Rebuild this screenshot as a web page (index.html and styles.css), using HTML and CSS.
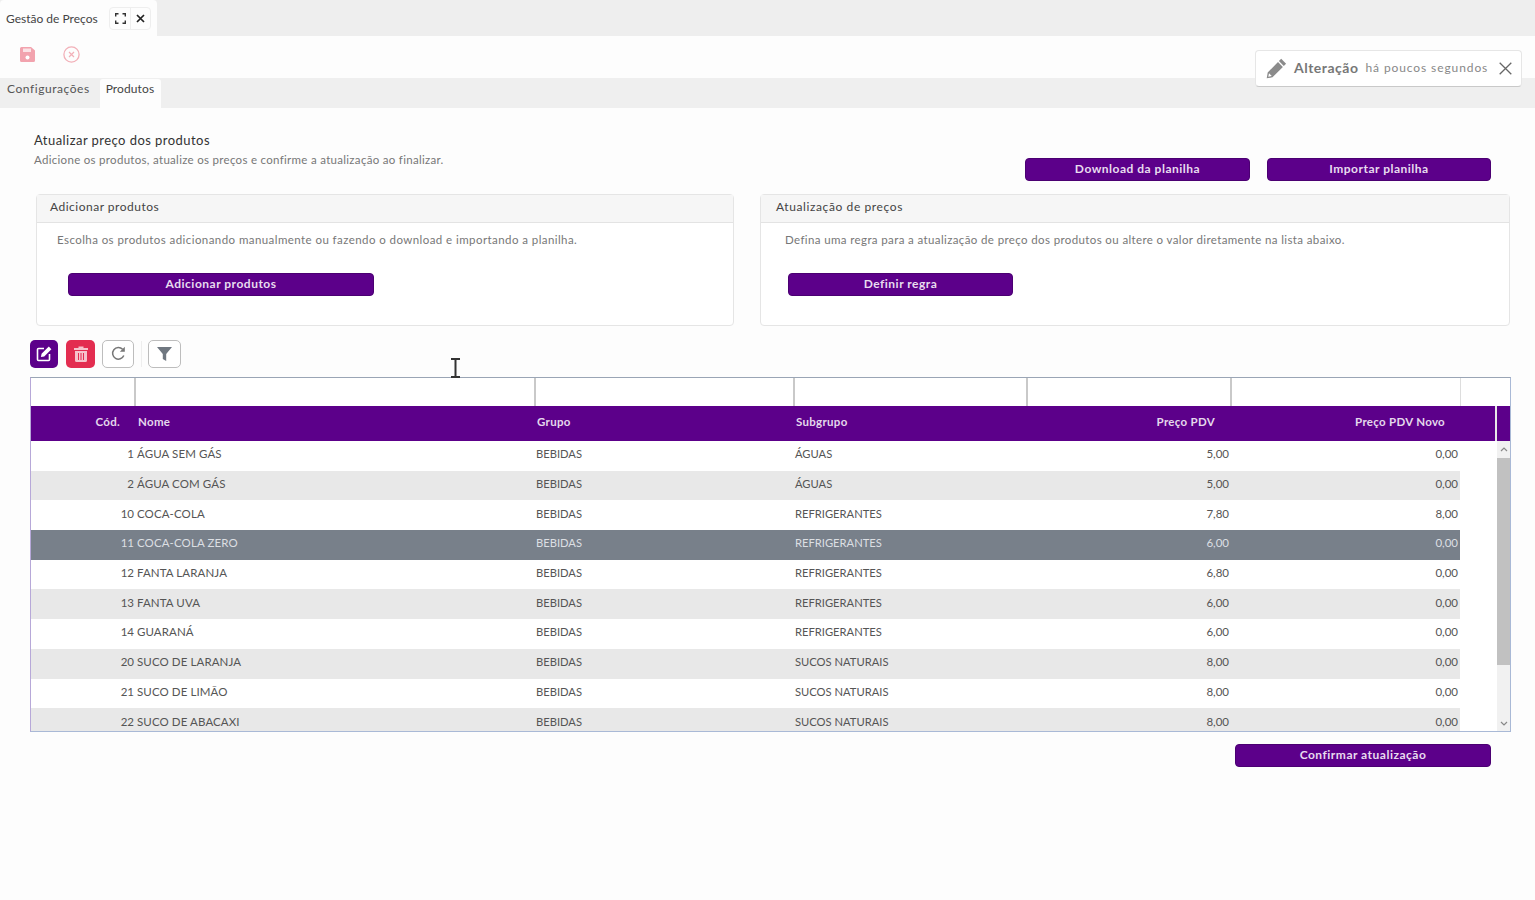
FILE: index.html

```html
<!DOCTYPE html>
<html lang="pt-BR">
<head>
    <meta charset="UTF-8">
    <meta name="viewport" content="width=device-width, initial-scale=1.0">
    <title>Gestão de Preços</title>
    <link rel="stylesheet" href="styles.css">
</head>
<body>
    <div class="window-bar">
        <div class="window-tab">
            <span class="window-title">Gestão de Preços</span>
            <span class="window-actions">
                <button class="window-btn" aria-label="Expandir">
                    <svg width="11" height="11" viewBox="0 0 11 11" fill="none" stroke="#333" stroke-width="1.4"><path d="M.7 3.5V.7h2.8M7.5.7h2.8v2.8M10.3 7.5v2.8H7.5M3.5 10.3H.7V7.5"/></svg>
                </button>
                <button class="window-btn" aria-label="Fechar">
                    <svg width="9" height="9" viewBox="0 0 9 9" fill="none" stroke="#222" stroke-width="1.7"><path d="M1 1l7 7M8 1L1 8"/></svg>
                </button>
            </span>
        </div>
    </div>

    <div class="actions">
        <svg class="action-save" width="15" height="15" viewBox="0 0 15 15"><path fill="#f2a3ae" d="M1.5 0H11l4 3.5v10a1.500 1.500 0 0 1-1.500 1.500h-12A1.500 1.500 0 0 1 0 13.500v-12A1.500 1.500 0 0 1 1.500 0z"/><rect x="3" y="1.500" width="8" height="3.500" fill="#fbe3e6"/><circle cx="7.500" cy="10.500" r="2" fill="#fff"/></svg>
        <svg width="17" height="17" viewBox="0 0 17 17" fill="none" stroke="#f2b0b8"><circle cx="8.500" cy="8.500" r="7.600" stroke-width="1.300"/><path d="M6 6l5 5M11 6l-5 5" stroke-width="1.200"/></svg>
    </div>

    <div class="tabs">
        <span class="tab">Configurações</span>
        <span class="tab active">Produtos</span>
    </div>

    <div class="toast">
        <svg width="21" height="21" viewBox="0 0 21 21"><path fill="#8b8b8b" d="M15.200.8l4.900 4.900-2.300 2.300-4.900-4.900zM12 4l4.900 4.900L6.500 19.300.7 20.300l1-5.800zM3 15.200l-.7 3.500 3.500-.7z"/></svg>
        <strong>Alteração</strong>
        <span class="toast-time">há poucos segundos</span>
        <svg class="toast-close" width="13" height="13" viewBox="0 0 13 13" fill="none" stroke="#666" stroke-width="1.300"><path d="M.7.7l11.600 11.600M12.300.7L.7 12.300"/></svg>
    </div>

    <main class="content">
        <div class="intro">
            <div class="intro-text">
                <h1>Atualizar preço dos produtos</h1>
                <p>Adicione os produtos, atualize os preços e confirme a atualização ao finalizar.</p>
            </div>
            <div class="intro-buttons">
                <button class="btn btn-download">Download da planilha</button>
                <button class="btn btn-import">Importar planilha</button>
            </div>
        </div>

        <div class="panels">
            <section class="panel panel-add">
                <div class="panel-header">Adicionar produtos</div>
                <div class="panel-body">
                    <p>Escolha os produtos adicionando manualmente ou fazendo o download e importando a planilha.</p>
                    <button class="btn btn-add">Adicionar produtos</button>
                </div>
            </section>
            <section class="panel panel-rule">
                <div class="panel-header">Atualização de preços</div>
                <div class="panel-body">
                    <p>Defina uma regra para a atualização de preço dos produtos ou altere o valor diretamente na lista abaixo.</p>
                    <button class="btn btn-rule">Definir regra</button>
                </div>
            </section>
        </div>

        <div class="grid-tools">
            <button class="tool tool-edit" aria-label="Editar">
                <svg width="16" height="16" viewBox="0 0 16 16" fill="none" stroke="#fff" stroke-width="1.600"><path d="M8 2.500H2.500a1 1 0 0 0-1 1v10a1 1 0 0 0 1 1h10a1 1 0 0 0 1-1V8"/><path fill="#fff" stroke="none" d="M12.800.6l2.600 2.600-7.200 7.200-3.300.7.700-3.300z"/></svg>
            </button>
            <button class="tool tool-delete" aria-label="Excluir">
                <svg width="14" height="16" viewBox="0 0 14 16"><path fill="#f6c3cc" d="M0 2h4.500V.5h5V2H14v2H0zM1 5h12v9.500a1.500 1.500 0 0 1-1.500 1.500h-9A1.500 1.500 0 0 1 1 14.500z"/><path stroke="#e32d50" d="M4.500 7v7M7 7v7M9.500 7v7"/></svg>
            </button>
            <button class="tool tool-refresh" aria-label="Atualizar">
                <svg width="15" height="15" viewBox="0 0 15 15" fill="none" stroke="#777" stroke-width="1.500"><path d="M12.800 9.500A5.800 5.800 0 1 1 11.600 3.300"/><path fill="#777" stroke="none" d="M13.800.8v5h-5z"/></svg>
            </button>
            <span class="tool-sep"></span>
            <button class="tool tool-filter" aria-label="Filtrar">
                <svg width="15" height="14" viewBox="0 0 15 14"><path fill="#6f7780" d="M0 0h15L9.200 7v7l-3.400-2V7z"/></svg>
            </button>
        </div>

        <div class="grid">
            <div class="row filter-row">
                <span></span><span></span><span></span><span></span><span></span><span></span>
            </div>
            <div class="row head-row">
                <span class="num code-head">Cód.</span>
                <span class="head-name">Nome</span>
                <span>Grupo</span>
                <span>Subgrupo</span>
                <span class="num price-head">Preço PDV</span>
                <span class="num new-head">Preço PDV Novo</span>
            </div>
            <div class="grid-body">
                <div class="rows">
                    <div class="row"><span class="num">1</span><span class="name">ÁGUA SEM GÁS</span><span class="tag">BEBIDAS</span><span class="tag">ÁGUAS</span><span class="num">5,00</span><span class="num">0,00</span></div>
                    <div class="row alt"><span class="num">2</span><span class="name">ÁGUA COM GÁS</span><span class="tag">BEBIDAS</span><span class="tag">ÁGUAS</span><span class="num">5,00</span><span class="num">0,00</span></div>
                    <div class="row"><span class="num">10</span><span class="name">COCA-COLA</span><span class="tag">BEBIDAS</span><span class="tag">REFRIGERANTES</span><span class="num">7,80</span><span class="num">8,00</span></div>
                    <div class="row selected"><span class="num">11</span><span class="name">COCA-COLA ZERO</span><span class="tag">BEBIDAS</span><span class="tag">REFRIGERANTES</span><span class="num">6,00</span><span class="num">0,00</span></div>
                    <div class="row"><span class="num">12</span><span class="name">FANTA LARANJA</span><span class="tag">BEBIDAS</span><span class="tag">REFRIGERANTES</span><span class="num">6,80</span><span class="num">0,00</span></div>
                    <div class="row alt"><span class="num">13</span><span class="name">FANTA UVA</span><span class="tag">BEBIDAS</span><span class="tag">REFRIGERANTES</span><span class="num">6,00</span><span class="num">0,00</span></div>
                    <div class="row"><span class="num">14</span><span class="name">GUARANÁ</span><span class="tag">BEBIDAS</span><span class="tag">REFRIGERANTES</span><span class="num">6,00</span><span class="num">0,00</span></div>
                    <div class="row alt"><span class="num">20</span><span class="name">SUCO DE LARANJA</span><span class="tag">BEBIDAS</span><span class="tag">SUCOS NATURAIS</span><span class="num">8,00</span><span class="num">0,00</span></div>
                    <div class="row"><span class="num">21</span><span class="name">SUCO DE LIMÃO</span><span class="tag">BEBIDAS</span><span class="tag">SUCOS NATURAIS</span><span class="num">8,00</span><span class="num">0,00</span></div>
                    <div class="row alt"><span class="num">22</span><span class="name">SUCO DE ABACAXI</span><span class="tag">BEBIDAS</span><span class="tag">SUCOS NATURAIS</span><span class="num">8,00</span><span class="num">0,00</span></div>
                </div>
                <div class="scrollbar">
                    <svg width="8" height="5" viewBox="0 0 8 5" fill="none" stroke="#888" stroke-width="1.200"><path d="M1 4l3-3 3 3"/></svg>
                    <div class="scroll-thumb"></div>
                    <svg class="scroll-down" width="8" height="5" viewBox="0 0 8 5" fill="none" stroke="#888" stroke-width="1.200"><path d="M1 1l3 3 3-3"/></svg>
                </div>
            </div>
        </div>

        <div class="footer-actions">
            <button class="btn btn-confirm">Confirmar atualização</button>
        </div>
    </main>

    <!-- cursor do mouse no momento da captura -->
    <svg class="cursor" width="11" height="20" viewBox="0 0 11 20" fill="none" stroke="#333" stroke-width="2"><path d="M1 1h9M5.500 1v18M1 19h9"/></svg>
</body>
</html>
```

FILE: styles.css

```css
* {
    box-sizing: border-box;
}

body {
    font-family: Lato, "Open Sans", sans-serif;
    margin: 0;
    height: 900px;
    overflow: hidden;
    position: relative;
    background: #fdfdfd;
    color: #444;
    font-size: 12px;
}

button {
    font-family: inherit;
    cursor: pointer;
}

/* barra da janela */
.window-bar {
    height: 36px;
    background: #eeeeee;
}

.window-tab {
    display: flex;
    align-items: center;
    justify-content: space-between;
    width: 157px;
    height: 36px;
    padding: 0 6px 0 6px;
    background: #fdfdfd;
    border-radius: 4px 4px 0 0;
}

.window-title {
    font-size: 12px;
    color: #444;
}

.window-actions {
    display: flex;
    border: 1px solid #eee;
    border-radius: 4px;
}

.window-btn {
    display: flex;
    align-items: center;
    justify-content: center;
    width: 20px;
    height: 21px;
    padding: 0;
    background: transparent;
    border: none;
}

.window-btn + .window-btn {
    border-left: 1px solid #eee;
}

.actions {
    display: flex;
    align-items: center;
    gap: 28px;
    height: 42px;
    padding: 0 0 5px 20px;
}

.tabs {
    display: flex;
    align-items: flex-end;
    gap: 4px;
    height: 30px;
    background: #efefef;
}

.tab {
    display: flex;
    align-items: center;
    height: 29px;
    padding: 0 6px 10px 6px;
    font-size: 12px;
    letter-spacing: 0.55px;
    color: #555;
}

.tab:first-child {
    padding-left: 7px;
    padding-right: 6px;
}

.tab.active {
    padding-right: 7px;
    background: #fdfdfd;
    color: #444;
    letter-spacing: 0.1px;
    border-radius: 3px 3px 0 0;
}

.toast {
    position: absolute;
    top: 50px;
    left: 1255px;
    display: flex;
    align-items: center;
    width: 267px;
    height: 37px;
    padding: 0 9px 3px 10px;
    background: #fff;
    border: 1px solid #e6e6e6;
    border-bottom-color: #c9c9c9;
    border-radius: 4px;
    color: #777;
}

.toast svg {
    margin-top: 3px;
}

.toast strong {
    margin-left: 7px;
    font-size: 14px;
    font-weight: 700;
    letter-spacing: 0.5px;
    color: #777;
}

.toast-time {
    margin-left: 7px;
    font-size: 12px;
    letter-spacing: 0.9px;
    color: #888;
}

.toast-close {
    margin-left: auto;
}

/* conteúdo */
.content {
    padding: 0 24px 0 30px;
}

.intro {
    display: flex;
    justify-content: space-between;
    align-items: flex-end;
    height: 86px;
    padding: 0 20px 0 4px;
}

.intro-text {
    align-self: flex-start;
    margin-top: 24px;
}

.intro h1 {
    margin: 0 0 5px;
    font-size: 13px;
    font-weight: 400;
    letter-spacing: 0.45px;
    color: #333;
}

.intro p {
    margin: 0;
    font-size: 11.500px;
    letter-spacing: 0.3px;
    color: #777;
}

.intro-buttons {
    display: flex;
    gap: 17px;
    margin-bottom: 13px;
}

.btn {
    height: 23px;
    padding: 0 0 2px;
    background: #5c008a;
    border: 1px solid #4b0072;
    border-radius: 4px;
    color: #e8dcef;
    font-size: 12px;
    font-weight: 700;
    letter-spacing: 0.5px;
}

.btn-download {
    width: 225px;
}

.btn-import {
    width: 224px;
}

.panels {
    display: flex;
    gap: 26px;
    height: 132px;
    padding-left: 6px;
    margin-right: -5px;
}

.panel {
    border: 1px solid #e5e5e5;
    border-radius: 4px;
    background: #fff;
}

.panel-add {
    width: 698px;
}

.panel-rule {
    width: 750px;
}

.panel-header {
    height: 28px;
    padding: 0 13px;
    line-height: 23px;
    background: #f6f6f6;
    border-bottom: 1px solid #e3e3e3;
    font-size: 12px;
    letter-spacing: 0.5px;
    color: #444;
}

.panel-rule .panel-header {
    padding-left: 15px;
    letter-spacing: 0.6px;
}

.panel-body p {
    margin: 10px 0 0 20px;
    font-size: 11.500px;
    letter-spacing: 0.43px;
    color: #777;
}

.btn-add {
    display: block;
    width: 306px;
    margin: 27px 0 0 31px;
}

.panel-rule .panel-body p {
    margin-left: 24px;
    letter-spacing: 0.38px;
}

.btn-rule {
    display: block;
    width: 225px;
    margin: 27px 0 0 27px;
}

/* ferramentas da grade */
.grid-tools {
    display: flex;
    align-items: center;
    gap: 7px;
    height: 29px;
    margin-top: 13px;
}

.tool {
    display: flex;
    align-items: center;
    justify-content: center;
    height: 28px;
    padding: 0;
    border-radius: 5px;
    background: #fff;
}

.tool-edit {
    width: 28px;
    margin-right: 1px;
    background: #5c008a;
    border: none;
}

.tool-delete {
    width: 29px;
    background: #e32d50;
    border: none;
}

.tool-refresh {
    width: 32px;
    border: 1px solid #bdbdbd;
}

.tool-sep {
    width: 1px;
    height: 26px;
    margin-right: -1px;
    background: #eee;
}

.tool-filter {
    width: 33px;
    border: 1px solid #bdbdbd;
}

/* grade */
.grid {
    width: 1481px;
    height: 355px;
    margin-top: 9px;
    background: #fff;
    border: 1px solid #a9b9d6;
    border-left-color: #b7a8d8;
    border-top-color: #9aa5b5;
    font-size: 11.500px;
}

.row {
    display: grid;
    grid-template-columns: 105px 400px 259px 233px 204px 229px;
    align-items: center;
    height: 29.700px;
    width: 1429px;
    padding-bottom: 4px;
    color: #555;
}

.row span {
    padding-left: 1px;
    white-space: nowrap;
}

.row .num {
    padding: 0 3px 0 0;
    text-align: right;
}

.row .num:first-child {
    padding-right: 2px;
}

.row .name {
    letter-spacing: 0.1px;
}

.row .tag {
    padding-left: 0;
    font-size: 11.200px;
}

.filter-row {
    height: 28px;
    padding-bottom: 0;
}

.filter-row span {
    height: 100%;
    border-right: 2px solid #c9c9c9;
}

.filter-row span:last-child {
    border-right: 1px solid #ddd;
}

.head-row {
    width: 100%;
    height: 35px;
    background: #5c008a;
    color: #e4d8ec;
    font-weight: 700;
    letter-spacing: 0.3px;
    box-shadow: inset -13px 0 0 #5c008a, inset -15px 0 0 #e8e8e8;
}

.head-row .head-name {
    padding-left: 2px;
}

.head-row .num.code-head {
    padding-right: 16px;
}

.head-row .price-head {
    padding-right: 17px;
}

.head-row .new-head {
    padding-right: 16px;
}

.grid-body {
    display: flex;
    justify-content: space-between;
    height: 290px;
    overflow: hidden;
}

.rows {
    width: 1429px;
}

.row.alt {
    background: #e8e8e8;
}

.row.selected {
    background: #78808a;
    color: #dcdfe3;
}

.scrollbar {
    display: flex;
    flex-direction: column;
    align-items: center;
    width: 13px;
    padding-top: 6px;
    background: #f1f1f1;
}

.scroll-thumb {
    width: 100%;
    height: 207px;
    margin-top: 6px;
    background: #c1c1c1;
}

.scroll-down {
    margin-top: auto;
    margin-bottom: 5px;
}

.footer-actions {
    display: flex;
    justify-content: flex-end;
    width: 1461px;
    margin-top: 12px;
}

.btn-confirm {
    width: 256px;
}

.cursor {
    position: absolute;
    top: 358px;
    left: 450px;
}
```
